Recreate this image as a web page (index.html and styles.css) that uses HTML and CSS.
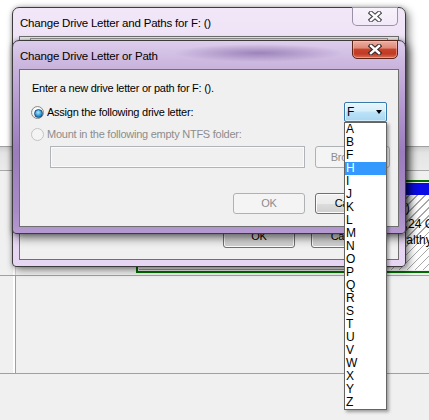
FILE: index.html
```html
<!DOCTYPE html>
<html>
<head>
<meta charset="utf-8">
<title>Change Drive Letter or Path</title>
<link rel="stylesheet" href="styles.css">
</head>
<body>
<div class="screen">
  <div class="app">
    <div class="listpane"></div>
    <div class="splitter"></div>
    <div class="graph">
      <div class="disk disk1">
        <div class="disk-label"></div>
        <div class="disk-area">
          <div class="extended">
            <div class="part part-a"></div>
            <div class="part part-f">
              <div class="part-head"></div>
              <div class="part-body">
                <div class="pl">(F:)</div>
                <div class="pl pl-size">2,24 GB NTFS</div>
                <div class="pl">Healthy</div>
              </div>
            </div>
          </div>
        </div>
      </div>
      <div class="disk disk2">
        <div class="disk-label"></div>
        <div class="disk-area"></div>
      </div>
    </div>
  </div>

  <div class="win outer">
    <div class="win-title">Change Drive Letter and Paths for F: ()</div>
    <div class="close close-inactive">
      <svg width="14" height="11" viewBox="0 0 14 11"><path d="M3 2L11 9M11 2L3 9" stroke="#4a4a4a" stroke-width="4.6" stroke-linecap="square"/><path d="M3 2L11 9M11 2L3 9" stroke="#fff" stroke-width="2.4" stroke-linecap="square"/></svg>
    </div>
    <div class="win-client outer-client">
      <div class="pathlist"></div>
      <div class="btn-row outer-btns">
        <div class="btn">OK</div>
        <div class="btn">Cancel</div>
      </div>
    </div>
  </div>

  <div class="win inner">
    <div class="win-title">Change Drive Letter or Path</div>
    <div class="close close-active">
      <svg width="14" height="11" viewBox="0 0 14 11"><path d="M3 2L11 9M11 2L3 9" stroke="#3a2a28" stroke-width="4.6" stroke-linecap="square"/><path d="M3 2L11 9M11 2L3 9" stroke="#fff" stroke-width="2.4" stroke-linecap="square"/></svg>
    </div>
    <div class="win-client inner-client">
      <div class="intro">Enter a new drive letter or path for F: ().</div>
      <div class="row row-assign">
        <div class="radio checked"></div>
        <div class="label">Assign the following drive letter:</div>
        <div class="combo">
          <span class="combo-value">F</span>
          <span class="combo-arrow"></span>
          <div class="droplist">
            <div class="item">A</div>
            <div class="item">B</div>
            <div class="item">F</div>
            <div class="item selected">H</div>
            <div class="item">I</div>
            <div class="item">J</div>
            <div class="item">K</div>
            <div class="item">L</div>
            <div class="item">M</div>
            <div class="item">N</div>
            <div class="item">O</div>
            <div class="item">P</div>
            <div class="item">Q</div>
            <div class="item">R</div>
            <div class="item">S</div>
            <div class="item">T</div>
            <div class="item">U</div>
            <div class="item">V</div>
            <div class="item">W</div>
            <div class="item">X</div>
            <div class="item">Y</div>
            <div class="item">Z</div>
          </div>
        </div>
      </div>
      <div class="row row-mount">
        <div class="radio disabled"></div>
        <div class="label disabled-text">Mount in the following empty NTFS folder:</div>
      </div>
      <div class="row row-folder">
        <div class="textbox"></div>
        <div class="btn disabled browse">Browse...</div>
      </div>
      <div class="btn-row inner-btns">
        <div class="btn disabled">OK</div>
        <div class="btn">Cancel</div>
      </div>
    </div>
  </div>
</div>
</body>
</html>
```

FILE: styles.css
```css
* { box-sizing: border-box; }
html, body { margin: 0; padding: 0; }
body {
  width: 429px;
  height: 420px;
  overflow: hidden;
  background: #f0f0f0;
  font-family: "Liberation Sans", Arial, sans-serif;
  font-size: 11px;
  letter-spacing: -0.25px;
  color: #000;
}
.screen { position: relative; width: 429px; height: 420px; overflow: hidden; }

/* background application */
.app { display: flex; flex-direction: column; height: 100%; }
.listpane { height: 147px; background: #fff; border-bottom: 1px solid #a0a0a0; flex: none; }
.splitter {
  height: 24px;
  flex: none;
  background: linear-gradient(#cfcfcf, #e4e4e4 6px, #ebebeb);
  border-bottom: 1px solid #a8a8a8;
  box-shadow: 0 1px 0 #fff;
}
.graph { flex: 1; background: #f0f0f0; }
.disk { display: flex; }
.disk1 { height: 104px; }
.disk2 { height: 99px; border-top: 1px solid #a0a0a0; border-bottom: 1px solid #a0a0a0; }
.disk-label { width: 16px; flex: none; border-right: 1px solid #a0a0a0; box-shadow: inset -2px 0 0 #fff; }
.disk1 .disk-label { border-right-color: #d0d0d0; }
.disk-area { flex: 1; display: flex; padding-left: 120px; }
.extended {
  margin-top: 9px;
  height: 93px;
  flex: 1;
  margin-right: -10px;
  border: 2px solid #006b00;
  padding: 1px;
  display: flex;
}
.part-a { flex: 1; border-bottom: 1px solid #9a9a9a; }
.part-f { width: 50px; flex: none; display: flex; flex-direction: column; }
.part-head { height: 12px; background: #0b0be6; flex: none; }
.part-body {
  flex: 1;
  padding: 5px 0 0 5px;
  background: repeating-linear-gradient(135deg, #fff 0 4.6px, #a8a8a8 4.6px 5.7px);
  white-space: nowrap;
  font-size: 12px;
  letter-spacing: 0;
  line-height: 16px;
}
.pl-size { padding-left: 7px; }

/* windows */
.win {
  position: absolute;
  left: 12px;
  width: 394px;
  border: 1px solid #3c3c3c;
  border-radius: 7px 7px 4px 4px;
  padding: 0 6px 6px;
  display: flex;
  flex-direction: column;
}
.outer {
  top: 7px;
  height: 260px;
  background: linear-gradient(#f1e7f8, #e8dcf3 40%, #e6d6f3);
  box-shadow: 3px 3px 9px rgba(0,0,0,0.45), 0 0 4px rgba(0,0,0,0.25);
}
.inner {
  top: 40px;
  height: 194px;
  background: linear-gradient(#ddcdec 0, #cdb9e0 20px, #b59cd1 60px, #9b7cbc 110px, #a88cc6 170px, #b49ad0);
  box-shadow: 3px 4px 10px rgba(0,0,0,0.55), 0 0 4px rgba(0,0,0,0.3);
}
.win-title {
  height: 28px;
  flex: none;
  display: flex;
  align-items: center;
  padding-left: 1px;
  padding-top: 1px;
  font-size: 11.5px;
  letter-spacing: -0.2px;
}
.inner .win-title {
  background: radial-gradient(ellipse 85px 9px at 240px 12px, rgba(110,80,150,0.55), rgba(110,80,150,0));
}
.close {
  position: absolute;
  top: -1px;
  right: 7px;
  width: 46px;
  height: 19px;
  border-radius: 0 0 5px 5px;
  display: flex;
  align-items: center;
  justify-content: center;
}
.close-inactive {
  border: 1px solid #9c8fa8;
  border-top: none;
  background: linear-gradient(rgba(255,255,255,0.5), rgba(255,255,255,0.15));
}
.close-active {
  border: 1px solid #5e2418;
  background: linear-gradient(#eab0a4 0, #e08a78 40%, #c7432b 50%, #c23a22 75%, #d7705c);
  box-shadow: inset 0 0 0 1px rgba(255,200,190,0.5);
}
.win-client {
  flex: 1;
  background: #f0f0f0;
  border: 1px solid #6f6f6f;
  position: relative;
  display: flex;
  flex-direction: column;
}

/* outer client */
.pathlist { height: 120px; margin: 1px 10px 0; border: 1px solid #9a9a9a; background: #fff; }
.btn-row { display: flex; justify-content: flex-end; }
.outer-btns { margin-top: auto; margin-bottom: 11px; padding-right: 15px; gap: 16px; }
.outer-btns .btn { height: 23px; line-height: 21px; }

/* inner client */
.intro { margin: 11px 0 0 12px; height: 15px; line-height: 15px; }
.row { display: flex; align-items: center; padding-left: 11px; }
.row-assign { margin-top: 6px; height: 20px; padding-right: 11px; }
.row-mount { margin-top: 5px; height: 14px; }
.row-folder { margin-top: 5px; padding-left: 30px; gap: 10px; height: 22px; }
.label { margin-left: 3px; line-height: 14px; }
.disabled-text { color: #8d8d8d; }
.radio {
  width: 13px;
  height: 13px;
  flex: none;
  border-radius: 50%;
  border: 1px solid #8a8a8a;
  background: radial-gradient(circle at 50% 40%, #ffffff 30%, #dedede);
  position: relative;
}
.radio.checked::after {
  content: "";
  position: absolute;
  left: 2px;
  top: 2px;
  width: 7px;
  height: 7px;
  border-radius: 50%;
  border: 1px solid #1b4f7a;
  background: radial-gradient(circle at 45% 35%, #a8ecff, #2f95d6 55%, #125a93);
}
.radio.disabled { border-color: #c4c4c4; background: #f4f4f4; }

.combo {
  margin-left: auto;
  width: 43px;
  height: 20px;
  border: 1px solid #3a7aab;
  border-radius: 2px;
  background: linear-gradient(#e8f5fc, #d6eefb 45%, #bde3f7 50%, #a6d6f1);
  box-shadow: inset 0 0 0 1px rgba(255,255,255,0.5);
  position: relative;
  display: flex;
  align-items: center;
  padding-left: 2px;
  padding-right: 4px;
  font-size: 12px;
  letter-spacing: 0;
}
.combo-value { line-height: 14px; }
.combo-arrow {
  margin-left: auto;
  width: 0;
  height: 0;
  border-left: 3.5px solid transparent;
  border-right: 3.5px solid transparent;
  border-top: 4px solid #000;
}
.droplist {
  position: absolute;
  left: -1px;
  top: 19px;
  width: 43px;
  background: #fff;
  border: 1px solid #646464;
  box-shadow: 2px 2px 3px rgba(0,0,0,0.35);
  z-index: 5;
}
.item { height: 13px; line-height: 13px; padding-left: 1px; font-size: 12px; }
.item.selected { background: #3399ff; color: #fff; }

.textbox {
  width: 255px;
  height: 22px;
  border: 1px solid #b0b4b8;
  background: #f0f0f0;
  box-shadow: inset 0 0 0 1px #fafafa;
}
.btn {
  width: 72px;
  height: 21px;
  border: 1px solid #707070;
  border-radius: 3px;
  background: linear-gradient(#f2f2f2, #ebebeb 50%, #dddddd 50%, #cfcfcf);
  box-shadow: inset 0 0 0 1px #fbfbfb;
  text-align: center;
  line-height: 19px;
}
.btn.disabled {
  border-color: #adb2b5;
  background: #f4f4f4;
  color: #8d8d8d;
  box-shadow: none;
}
.browse { width: 75px; height: 22px; line-height: 20px; }
.inner-btns { margin-top: 25px; padding-right: 11px; gap: 10px; }
```
